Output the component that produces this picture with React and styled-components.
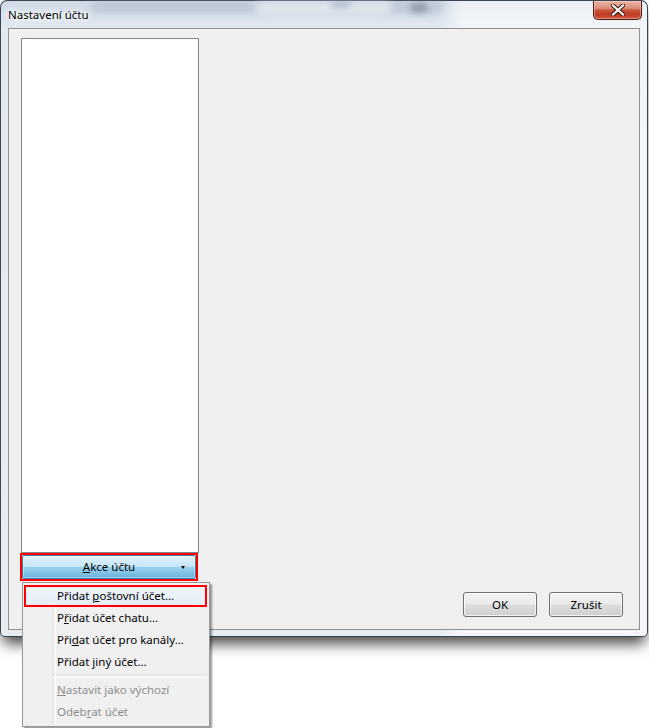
import React from 'react';
import styled, { createGlobalStyle } from 'styled-components';

const Global = createGlobalStyle`
  html, body { margin: 0; padding: 0; background: #ffffff; }
  body {
    font-family: "Segoe UI", "Noto Sans", "Open Sans", sans-serif;
    font-size: 11.5px;
    color: #000;
  }
  * { box-sizing: border-box; }
`;

const Stage = styled.div`
  position: relative;
  width: 649px;
  height: 728px;
  overflow: hidden;
  background: #ffffff;
`;

const Window = styled.div`
  position: relative;
  width: 648px;
  height: 637px;
  border: 1px solid rgba(28, 38, 52, 0.85);
  border-radius: 7px 7px 5px 5px;
  background:
    linear-gradient(90deg, rgba(255,255,255,0) 0px, rgba(255,255,255,0) 440px, rgba(255,255,255,0.55) 460px, rgba(255,255,255,0.55) 100%),
    linear-gradient(180deg, #cfd9e4 0px, #dbe4ee 14px, #e3e9f0 30px, #e8ecf1 100%);
  box-shadow: 0 10px 14px -3px rgba(0, 0, 0, 0.7);
  display: flex;
  flex-direction: column;
`;

const GlassBlur = styled.div`
  position: absolute;
  top: ${p => p.$top}px;
  left: ${p => p.$left}px;
  width: ${p => p.$w}px;
  height: ${p => p.$h}px;
  background: ${p => p.$c};
  filter: blur(${p => p.$blur || 3}px);
  border-radius: 3px;
  pointer-events: none;
`;

const TitleBar = styled.div`
  position: relative;
  height: 27px;
  display: flex;
  justify-content: space-between;
  align-items: flex-start;
`;

const Title = styled.div`
  padding: 6px 0 0 7px;
  line-height: 16px;
  font-size: 11.5px;
  color: #000;
  text-shadow: 0 0 6px #fff, 0 0 3px #fff, 0 0 10px #fff;
  position: relative;
`;

const CloseButton = styled.div`
  position: relative;
  margin-right: 5px;
  width: 49px;
  height: 19px;
  border: 1px solid #4a1a10;
  border-top: none;
  border-radius: 0 0 5px 5px;
  background: linear-gradient(180deg, #eab3a4 0%, #dc8e79 40%, #c9533a 52%, #bf3a22 75%, #d0583c 100%);
  box-shadow: inset 0 0 0 1px rgba(255, 220, 210, 0.45);
  display: flex;
  align-items: center;
  justify-content: center;
`;

const Client = styled.div`
  margin-left: 7px;
  width: 632px;
  height: 602px;
  border: 1px solid #8e9091;
  background: #f0f0f0;
  display: grid;
  grid-template-columns: 178px 1fr;
  padding: 9px 16px 12px 12px;
`;

const LeftColumn = styled.div`
  display: flex;
  flex-direction: column;
  margin-bottom: 36px;
`;

const AccountList = styled.div`
  flex: 1;
  background: #ffffff;
  border: 1px solid #828790;
`;

const RedFrame = styled.div`
  margin-left: -1px;
  width: 178px;
  border: 2px solid #ff0000;
  display: flex;
`;

const ActionButton = styled.div`
  position: relative;
  flex: 1;
  height: 24px;
  border: 1px solid #3c7fb1;
  border-radius: 2px;
  background: linear-gradient(180deg, #e5f4fc 0%, #c4e5f6 48%, #98d1ef 52%, #68b3db 100%);
  box-shadow: inset 0 0 0 1px rgba(255, 255, 255, 0.35);
  display: flex;
  align-items: center;
  justify-content: center;
  line-height: 20px;
`;

const DropArrow = styled.div`
  position: absolute;
  right: 10px;
  top: 10px;
  width: 0;
  height: 0;
  border-left: 2.5px solid transparent;
  border-right: 2.5px solid transparent;
  border-top: 3px solid #000;
`;

const Key = styled.span`
  text-decoration: underline;
`;

const RightColumn = styled.div`
  display: flex;
  justify-content: flex-end;
  align-items: flex-end;
  gap: 12px;
`;

const DialogButton = styled.div`
  width: 74px;
  height: 25px;
  border: 1px solid #707070;
  border-radius: 3px;
  background: linear-gradient(180deg, #f2f2f2 0%, #ebebeb 48%, #dddddd 52%, #cfcfcf 100%);
  box-shadow: inset 0 0 0 1px rgba(255, 255, 255, 0.75);
  display: flex;
  align-items: center;
  justify-content: center;
  line-height: 20px;
`;

const BottomFrame = styled.div`
  flex: 1;
`;

const Menu = styled.div`
  position: absolute;
  left: 22px;
  top: 582px;
  width: 188px;
  height: 145px;
  border: 1px solid #979797;
  background: #f0f0f0;
  padding: 2px;
  box-shadow: 2px 2px 2px rgba(0, 0, 0, 0.4);
  display: flex;
  flex-direction: column;
  &::before {
    content: "";
    position: absolute;
    left: 29px;
    top: 2px;
    bottom: 2px;
    width: 2px;
    border-left: 1px solid #e2e3e3;
    border-right: 1px solid #ffffff;
  }
`;

const MenuItem = styled.div`
  position: relative;
  height: 22px;
  line-height: 20px;
  padding-left: 31px;
  border: 1px solid ${p => (p.$hot ? '#aeccef' : 'transparent')};
  border-radius: 3px;
  background: ${p => (p.$hot ? 'linear-gradient(180deg, #f0f5fb 0%, #e3ecf7 100%)' : 'transparent')};
  color: ${p => (p.$disabled ? '#8d8d8d' : '#000')};
  white-space: nowrap;
`;

const Marker = styled.div`
  position: absolute;
  left: -2px;
  top: -1px;
  right: -1px;
  bottom: -1px;
  border: 2px solid #ff0000;
  pointer-events: none;
`;

const Separator = styled.div`
  height: 6px;
  margin-left: 28px;
  display: flex;
  align-items: center;
  &::after {
    content: "";
    flex: 1;
    height: 2px;
    border-top: 1px solid #e0e0e0;
    border-bottom: 1px solid #ffffff;
  }
`;

export default function App() {
  return (
    <>
      <Global />
      <Stage>
        <Window>
          <GlassBlur $top={1} $left={90} $w={350} $h={12} $c="rgba(150,165,182,0.4)" $blur={4} />
          <GlassBlur $top={2} $left={255} $w={135} $h={10} $c="rgba(250,252,255,0.7)" $blur={4} />
          <GlassBlur $top={2} $left={410} $w={16} $h={10} $c="rgba(90,100,115,0.45)" $blur={3} />
          <GlassBlur $top={1} $left={330} $w={20} $h={6} $c="rgba(110,130,160,0.4)" $blur={3} />
          <TitleBar>
            <Title>Nastavení účtu</Title>
            <CloseButton>
              <svg width="14" height="12" viewBox="0 0 14 12">
                <path d="M2 1.5 L12 10.5 M12 1.5 L2 10.5" stroke="#3a1410" strokeWidth="4.2" strokeLinecap="square" />
                <path d="M2 1.5 L12 10.5 M12 1.5 L2 10.5" stroke="#ffffff" strokeWidth="2.2" strokeLinecap="square" />
              </svg>
            </CloseButton>
          </TitleBar>
          <Client>
            <LeftColumn>
              <AccountList />
              <RedFrame>
                <ActionButton>
                  <span><Key>A</Key>kce účtu</span>
                  <DropArrow />
                </ActionButton>
              </RedFrame>
            </LeftColumn>
            <RightColumn>
              <DialogButton>OK</DialogButton>
              <DialogButton>Zrušit</DialogButton>
            </RightColumn>
          </Client>
          <BottomFrame />
        </Window>
        <Menu>
          <MenuItem $hot>
            Přidat <Key>p</Key>oštovní účet…
            <Marker />
          </MenuItem>
          <MenuItem>P<Key>ř</Key>idat účet chatu…</MenuItem>
          <MenuItem>Při<Key>d</Key>at účet pro kanály…</MenuItem>
          <MenuItem>Přidat <Key>j</Key>iný účet…</MenuItem>
          <Separator />
          <MenuItem $disabled><Key>N</Key>astavit jako výchozí</MenuItem>
          <MenuItem $disabled>Odeb<Key>r</Key>at účet</MenuItem>
        </Menu>
      </Stage>
    </>
  );
}
